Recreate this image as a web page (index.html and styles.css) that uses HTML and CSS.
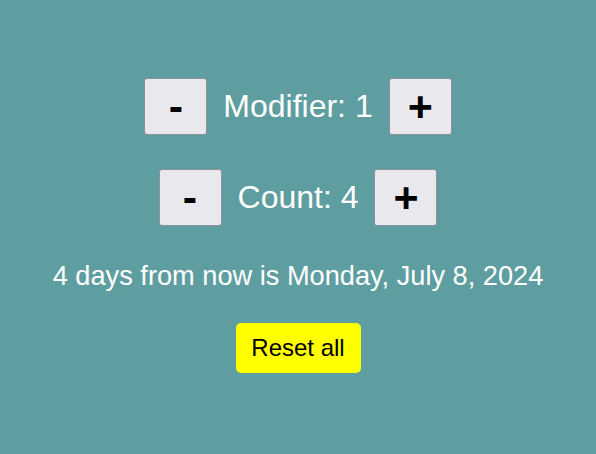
FILE: index.html
```html
<!DOCTYPE html>
<html lang="en">
<head>
<meta charset="utf-8">
<title>Counter</title>
<link rel="stylesheet" href="styles.css">
</head>
<body>
<main class="app">
  <div class="row">
    <button class="step">-</button>
    <span class="label">Modifier: 1</span>
    <button class="step">+</button>
  </div>
  <div class="row">
    <button class="step">-</button>
    <span class="label">Count: 4</span>
    <button class="step">+</button>
  </div>
  <p class="result">4 days from now is Monday, July 8, 2024</p>
  <button class="reset">Reset all</button>
</main>
</body>
</html>
```
FILE: styles.css
```css
html, body {
  margin: 0;
  padding: 0;
  background: #5f9ea0;
  font-family: "Liberation Sans", Arial, sans-serif;
}

.app {
  display: flex;
  flex-direction: column;
  align-items: center;
  padding-top: 78px;
}

.row {
  display: flex;
  align-items: center;
  height: 57px;
  margin-bottom: 34px;
}

.step {
  box-sizing: border-box;
  width: 63px;
  height: 57px;
  padding: 0;
  font-family: "Liberation Sans", Arial, sans-serif;
  font-size: 43px;
  font-weight: bold;
  line-height: 1;
  color: #000;
  background: #e9e9ed;
  border: 1px solid #8f8f9d;
  border-radius: 3px;
}

.label {
  margin: 0 16px;
  font-size: 32px;
  color: #fff;
  line-height: 37px;
}

.result {
  margin: 0 0 32px;
  font-size: 27.2px;
  line-height: 31px;
  color: #fff;
}

.reset {
  box-sizing: border-box;
  width: 125px;
  height: 50px;
  padding: 0;
  font-family: "Liberation Sans", Arial, sans-serif;
  font-size: 24px;
  color: #000;
  background: #ffff00;
  border: none;
  border-radius: 5px;
}
```
